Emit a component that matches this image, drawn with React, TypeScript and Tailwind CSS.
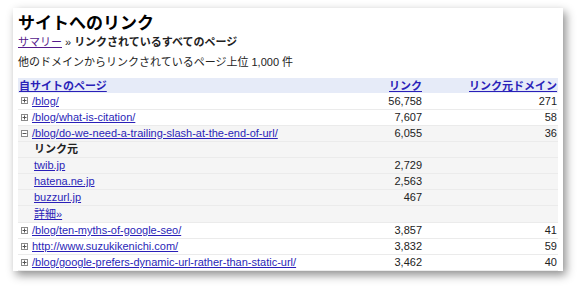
import React from 'react'

type Row = {
  url: string
  links: string
  domains?: string
  open?: boolean
}

const rows: Row[] = [
  { url: '/blog/', links: '56,758', domains: '271' },
  { url: '/blog/what-is-citation/', links: '7,607', domains: '58' },
  { url: '/blog/do-we-need-a-trailing-slash-at-the-end-of-url/', links: '6,055', domains: '36', open: true },
]

const sources = [
  { name: 'twib.jp', links: '2,729' },
  { name: 'hatena.ne.jp', links: '2,563' },
  { name: 'buzzurl.jp', links: '467' },
]

const rest: Row[] = [
  { url: '/blog/ten-myths-of-google-seo/', links: '3,857', domains: '41' },
  { url: 'http://www.suzukikenichi.com/', links: '3,832', domains: '59' },
  { url: '/blog/google-prefers-dynamic-url-rather-than-static-url/', links: '3,462', domains: '40' },
]

const Toggle = ({ open }: { open?: boolean }) => (
  <svg width="7" height="7" viewBox="0 0 7 7" className="mr-[4px] shrink-0">
    <rect x="0.5" y="0.5" width="6" height="6" fill="white" stroke="#8a8a8a" />
    <line x1="1.5" y1="3.5" x2="5.5" y2="3.5" stroke="#555" />
    {!open && <line x1="3.5" y1="1.5" x2="3.5" y2="5.5" stroke="#555" />}
  </svg>
)

const link = 'text-[#2a1fb8] underline'

const UrlRow = ({ row }: { row: Row }) => (
  <tr className={`h-[16px] border-b border-[#ebebeb] ${row.open ? 'bg-[#f5f5f5]' : ''}`}>
    <td className="pl-[3px]">
      <div className="flex items-center">
        <Toggle open={row.open} />
        <a className={link}>{row.url}</a>
      </div>
    </td>
    <td className="text-right">{row.links}</td>
    <td className="text-right pr-[1px]">{row.domains}</td>
  </tr>
)

export default function App() {
  return (
    <div className="w-[578px] h-[291px] bg-white pt-[8px] pl-[13px]">
      <div
        className="w-[550px] h-[263px] bg-white shadow-[3px_4px_9px_rgba(0,0,0,0.45)] pl-[5px] pr-[5px] pt-[6px] text-[11px] leading-[14px] text-[#222]"
        style={{ fontFamily: '"Liberation Sans", Arial, "Noto Sans CJK JP", sans-serif' }}
      >
        <h1 className="text-[17px] leading-[20px] font-bold text-black">サイトへのリンク</h1>
        <div className="mt-[1px] flex items-center">
          <a className="text-[#551a8b] underline">サマリー</a>
          <span className="mx-[3px]">»</span>
          <span className="font-bold">リンクされているすべてのページ</span>
        </div>
        <p className="mt-[6px]">他のドメインからリンクされているページ上位 1,000 件</p>
        <table className="mt-[9px] w-[540px] border-collapse">
          <thead>
            <tr className="h-[15px] bg-[#e6ebf8]">
              <th className="text-left pl-[1px] font-bold">
                <a className={link}>自サイトのページ</a>
              </th>
              <th className="text-right w-[120px] font-bold">
                <a className={link}>リンク</a>
              </th>
              <th className="text-right w-[136px] pr-[1px] font-bold">
                <a className={link}>リンク元ドメイン</a>
              </th>
            </tr>
          </thead>
          <tbody>
            {rows.map((r) => (
              <UrlRow key={r.url} row={r} />
            ))}
            <tr className="h-[16px] border-b border-[#ebebeb] bg-[#f5f5f5]">
              <td className="pl-[16px] font-bold">リンク元</td>
              <td />
              <td />
            </tr>
            {sources.map((s) => (
              <tr key={s.name} className="h-[16px] border-b border-[#ebebeb] bg-[#f5f5f5]">
                <td className="pl-[16px]">
                  <a className={link}>{s.name}</a>
                </td>
                <td className="text-right">{s.links}</td>
                <td />
              </tr>
            ))}
            <tr className="h-[17px] border-b border-[#ebebeb] bg-[#f5f5f5]">
              <td className="pl-[16px]">
                <a className={link}>詳細»</a>
              </td>
              <td />
              <td />
            </tr>
            {rest.map((r) => (
              <UrlRow key={r.url} row={r} />
            ))}
          </tbody>
        </table>
      </div>
    </div>
  )
}
